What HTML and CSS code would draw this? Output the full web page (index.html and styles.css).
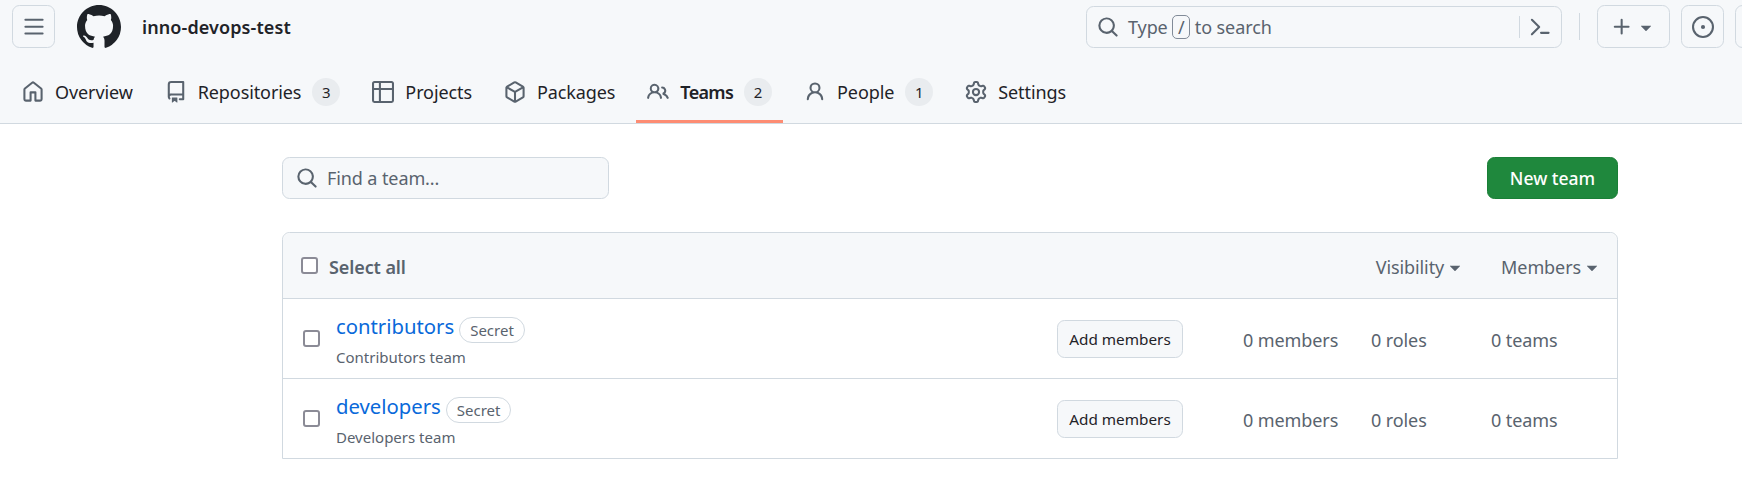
FILE: index.html
```html
<!DOCTYPE html>
<html lang="en">
    <head>
        <meta charset="UTF-8">
        <meta name="viewport" content="width=device-width, initial-scale=1.0">
        <title>Teams · inno-devops-test</title>
        <link rel="stylesheet" href="styles.css">
    </head>
    <body>
        <svg class="defs" width="0" height="0">
            <symbol id="i-bars" viewBox="0 0 16 16"><path d="M1 2.75A.75.75 0 0 1 1.75 2h12.5a.75.75 0 0 1 0 1.5H1.75A.75.75 0 0 1 1 2.75Zm0 5A.75.75 0 0 1 1.75 7h12.5a.75.75 0 0 1 0 1.5H1.75A.75.75 0 0 1 1 7.75ZM1.75 12h12.5a.75.75 0 0 1 0 1.5H1.75a.75.75 0 0 1 0-1.5Z"/></symbol>
            <symbol id="i-mark" viewBox="0 0 16 16"><path d="M8 0c4.42 0 8 3.58 8 8a8.013 8.013 0 0 1-5.45 7.59c-.4.08-.55-.17-.55-.38 0-.27.01-1.13.01-2.2 0-.75-.25-1.23-.54-1.48 1.78-.2 3.65-.88 3.65-3.95 0-.88-.31-1.59-.82-2.15.08-.2.36-1.02-.08-2.12 0 0-.67-.22-2.2.82-.64-.18-1.32-.27-2-.27-.68 0-1.36.09-2 .27-1.53-1.03-2.2-.82-2.2-.82-.44 1.1-.16 1.92-.08 2.12-.51.56-.82 1.28-.82 2.15 0 3.06 1.86 3.75 3.64 3.95-.23.2-.44.55-.51 1.07-.46.21-1.61.55-2.33-.66-.15-.24-.6-.83-1.23-.82-.67.01-.27.38.01.53.34.19.73.9.82 1.13.16.45.68 1.31 2.69.94 0 .67.01 1.3.01 1.49 0 .21-.15.45-.55.38A7.995 7.995 0 0 1 0 8c0-4.42 3.58-8 8-8Z"/></symbol>
            <symbol id="i-search" viewBox="0 0 16 16"><path d="M10.68 11.74a6 6 0 0 1-7.922-8.982 6 6 0 0 1 8.982 7.922l3.04 3.04a.749.749 0 0 1-.326 1.275.749.749 0 0 1-.734-.215ZM11.5 7a4.499 4.499 0 1 0-8.997 0A4.499 4.499 0 0 0 11.5 7Z"/></symbol>
            <symbol id="i-palette" viewBox="0 0 16 16"><path d="m6.354 8.04-4.773 4.773a.75.75 0 1 0 1.061 1.06L7.945 8.57a.75.75 0 0 0 0-1.06L2.642 2.206a.75.75 0 0 0-1.061 1.061L6.354 8.04ZM8.75 11.5a.75.75 0 0 0 0 1.5h5.5a.75.75 0 0 0 0-1.5h-5.5Z"/></symbol>
            <symbol id="i-plus" viewBox="0 0 16 16"><path d="M7.75 2a.75.75 0 0 1 .75.75V7h4.25a.75.75 0 0 1 0 1.5H8.5v4.25a.75.75 0 0 1-1.5 0V8.5H2.75a.75.75 0 0 1 0-1.5H7V2.75A.75.75 0 0 1 7.75 2Z"/></symbol>
            <symbol id="i-caret" viewBox="0 0 16 16"><path d="m4.427 7.427 3.396 3.396a.25.25 0 0 0 .354 0l3.396-3.396A.25.25 0 0 0 11.396 7H4.604a.25.25 0 0 0-.177.427Z"/></symbol>
            <symbol id="i-issue" viewBox="0 0 16 16"><path d="M8 9.5a1.5 1.5 0 1 0 0-3 1.5 1.5 0 0 0 0 3Z"/><path d="M8 0a8 8 0 1 1 0 16A8 8 0 0 1 8 0ZM1.5 8a6.5 6.5 0 1 0 13 0 6.5 6.5 0 0 0-13 0Z"/></symbol>
            <symbol id="i-home" viewBox="0 0 16 16"><path d="M6.906.664a1.749 1.749 0 0 1 2.187 0l5.25 4.2c.415.332.657.835.657 1.367v7.019A1.75 1.75 0 0 1 13.25 15h-3.5a.75.75 0 0 1-.75-.75V9H7v5.25a.75.75 0 0 1-.75.75h-3.5A1.75 1.75 0 0 1 1 13.25V6.23c0-.531.242-1.034.657-1.366l5.25-4.2Zm1.25 1.171a.25.25 0 0 0-.312 0l-5.25 4.2a.25.25 0 0 0-.094.196v7.019c0 .138.112.25.25.25H5.5V8.25a.75.75 0 0 1 .75-.75h3.5a.75.75 0 0 1 .75.75v5.25h2.75a.25.25 0 0 0 .25-.25V6.23a.25.25 0 0 0-.094-.195Z"/></symbol>
            <symbol id="i-repo" viewBox="0 0 16 16"><path d="M2 2.5A2.5 2.5 0 0 1 4.5 0h8.75a.75.75 0 0 1 .75.75v12.5a.75.75 0 0 1-.75.75h-2.5a.75.75 0 0 1 0-1.5h1.75v-2h-8a1 1 0 0 0-.714 1.7.75.75 0 1 1-1.072 1.05A2.495 2.495 0 0 1 2 11.5Zm10.5-1h-8a1 1 0 0 0-1 1v6.708A2.486 2.486 0 0 1 4.5 9h8ZM5 12.25a.25.25 0 0 1 .25-.25h3.5a.25.25 0 0 1 .25.25v3.25a.25.25 0 0 1-.4.2l-1.45-1.087a.249.249 0 0 0-.3 0L5.4 15.7a.25.25 0 0 1-.4-.2Z"/></symbol>
            <symbol id="i-table" viewBox="0 0 16 16"><path d="M0 1.75C0 .784.784 0 1.75 0h12.5C15.216 0 16 .784 16 1.75v12.5A1.75 1.75 0 0 1 14.25 16H1.75A1.75 1.75 0 0 1 0 14.25ZM6.5 6.5v8h7.75a.25.25 0 0 0 .25-.25V6.5Zm8-1.5V1.75a.25.25 0 0 0-.25-.25H6.5V5ZM5 5V1.5H1.75a.25.25 0 0 0-.25.25V5Zm-3.5 1.5v7.75c0 .138.112.25.25.25H5v-8Z"/></symbol>
            <symbol id="i-package" viewBox="0 0 16 16"><path d="m8.878.392 5.25 3.045c.54.314.872.89.872 1.514v6.098a1.75 1.75 0 0 1-.872 1.514l-5.25 3.045a1.75 1.75 0 0 1-1.756 0l-5.25-3.045A1.75 1.75 0 0 1 1 11.049V4.951c0-.624.332-1.201.872-1.514L7.122.392a1.75 1.75 0 0 1 1.756 0ZM7.875 1.69l-4.63 2.685L8 7.133l4.755-2.758-4.63-2.685a.248.248 0 0 0-.25 0ZM2.5 5.677v5.372c0 .09.047.171.125.216l4.625 2.683V8.432Zm6.25 8.271 4.625-2.683a.25.25 0 0 0 .125-.216V5.677L8.75 8.432Z"/></symbol>
            <symbol id="i-people" viewBox="0 0 16 16"><path d="M2 5.5a3.5 3.5 0 1 1 5.898 2.549 5.508 5.508 0 0 1 3.034 4.084.75.75 0 1 1-1.482.235 4 4 0 0 0-7.9 0 .75.75 0 0 1-1.482-.236A5.507 5.507 0 0 1 3.102 8.05 3.493 3.493 0 0 1 2 5.5ZM11 4a3.001 3.001 0 0 1 2.22 5.018 5.01 5.01 0 0 1 2.56 3.012.749.749 0 0 1-.885.954.752.752 0 0 1-.549-.514 3.507 3.507 0 0 0-2.522-2.372.75.75 0 0 1-.574-.73v-.352a.75.75 0 0 1 .416-.672A1.5 1.5 0 0 0 11 5.5.75.75 0 0 1 11 4Zm-5.5-.5a2 2 0 1 0-.001 3.999A2 2 0 0 0 5.5 3.5Z"/></symbol>
            <symbol id="i-person" viewBox="0 0 16 16"><path d="M10.561 8.073a6.005 6.005 0 0 1 3.432 5.142.75.75 0 1 1-1.498.07 4.5 4.5 0 0 0-8.99 0 .75.75 0 0 1-1.498-.07 6.004 6.004 0 0 1 3.431-5.142 3.999 3.999 0 1 1 5.123 0ZM10.5 5a2.5 2.5 0 1 0-5 0 2.5 2.5 0 0 0 5 0Z"/></symbol>
            <symbol id="i-gear" viewBox="0 0 16 16"><path d="M8 0a8.2 8.2 0 0 1 .701.031C9.444.095 9.99.645 10.16 1.29l.288 1.107c.018.066.079.158.212.224.231.114.454.243.668.386.123.082.233.09.299.071l1.103-.303c.644-.176 1.392.021 1.82.63.27.385.506.792.704 1.218.315.675.111 1.422-.364 1.891l-.814.806c-.049.048-.098.147-.088.294.016.257.016.515 0 .772-.01.147.038.246.088.294l.814.806c.475.469.679 1.216.364 1.891a7.977 7.977 0 0 1-.704 1.217c-.428.61-1.176.807-1.82.63l-1.102-.302c-.067-.019-.177-.011-.3.071a5.909 5.909 0 0 1-.668.386c-.133.066-.194.158-.211.224l-.29 1.106c-.168.646-.715 1.196-1.458 1.26a8.006 8.006 0 0 1-1.402 0c-.743-.064-1.289-.614-1.458-1.26l-.289-1.106c-.018-.066-.079-.158-.212-.224a5.738 5.738 0 0 1-.668-.386c-.123-.082-.233-.09-.299-.071l-1.103.303c-.644.176-1.392-.021-1.82-.63a8.12 8.12 0 0 1-.704-1.218c-.315-.675-.111-1.422.363-1.891l.815-.806c.05-.048.098-.147.088-.294a6.214 6.214 0 0 1 0-.772c.01-.147-.038-.246-.088-.294l-.815-.806C.635 6.045.431 5.298.746 4.623a7.92 7.92 0 0 1 .704-1.217c.428-.61 1.176-.807 1.82-.63l1.102.302c.067.019.177.011.3-.071.214-.143.437-.272.668-.386.133-.066.194-.158.211-.224l.29-1.106C6.009.645 6.556.095 7.299.03 7.53.01 7.764 0 8 0Zm-.571 1.525c-.036.003-.108.036-.137.146l-.289 1.105c-.147.561-.549.967-.998 1.189-.173.086-.34.183-.5.29-.417.278-.97.423-1.529.27l-1.103-.303c-.109-.03-.175.016-.195.045-.22.312-.412.644-.573.99-.014.031-.021.11.059.19l.815.806c.411.406.562.957.53 1.456a4.709 4.709 0 0 0 0 .582c.032.499-.119 1.05-.53 1.456l-.815.806c-.081.08-.073.159-.059.19.162.346.353.677.573.989.02.03.085.076.195.046l1.102-.303c.56-.153 1.113-.008 1.53.27.161.107.328.204.501.29.447.222.85.629.997 1.189l.289 1.105c.029.109.101.143.137.146a6.6 6.6 0 0 0 1.142 0c.036-.003.108-.036.137-.146l.289-1.105c.147-.561.549-.967.998-1.189.173-.086.34-.183.5-.29.417-.278.97-.423 1.529-.27l1.103.303c.109.029.175-.016.195-.045.22-.313.411-.644.573-.99.014-.031.021-.11-.059-.19l-.815-.806c-.411-.406-.562-.957-.53-1.456a4.709 4.709 0 0 0 0-.582c-.032-.499.119-1.05.53-1.456l.815-.806c.081-.08.073-.159.059-.19a6.464 6.464 0 0 0-.573-.989c-.02-.03-.085-.076-.195-.046l-1.102.303c-.56.153-1.113.008-1.53-.27a4.44 4.44 0 0 0-.501-.29c-.447-.222-.85-.629-.997-1.189l-.289-1.105c-.029-.11-.101-.143-.137-.146a6.6 6.6 0 0 0-1.142 0ZM11 8a3 3 0 1 1-6 0 3 3 0 0 1 6 0ZM9.5 8a1.5 1.5 0 1 0-3.001.001A1.5 1.5 0 0 0 9.5 8Z"/></symbol>
        </svg>

        <header class="site-head">
            <div class="top-bar">
                <button class="icon-btn menu-btn"><svg class="icon"><use href="#i-bars"/></svg></button>
                <svg class="logo"><use href="#i-mark"/></svg>
                <a class="org-name">inno-devops-test</a>
                <div class="top-search">
                    <svg class="icon"><use href="#i-search"/></svg>
                    <span class="top-search-text">Type <kbd class="slash">/</kbd> to search</span>
                    <span class="top-search-sep"></span>
                    <svg class="icon palette"><use href="#i-palette"/></svg>
                </div>
                <span class="top-sep"></span>
                <button class="icon-btn plus-btn">
                    <svg class="icon"><use href="#i-plus"/></svg>
                    <svg class="caret"><use href="#i-caret"/></svg>
                </button>
                <button class="icon-btn issue-btn"><svg class="icon"><use href="#i-issue"/></svg></button>
                <button class="icon-btn cut-btn"></button>
            </div>
            <nav class="tabs">
                <a class="tab"><svg class="icon"><use href="#i-home"/></svg>Overview</a>
                <a class="tab"><svg class="icon"><use href="#i-repo"/></svg>Repositories<span class="count">3</span></a>
                <a class="tab"><svg class="icon"><use href="#i-table"/></svg>Projects</a>
                <a class="tab"><svg class="icon"><use href="#i-package"/></svg>Packages</a>
                <a class="tab current"><svg class="icon"><use href="#i-people"/></svg><b>Teams</b><span class="count">2</span></a>
                <a class="tab"><svg class="icon"><use href="#i-person"/></svg>People<span class="count">1</span></a>
                <a class="tab"><svg class="icon"><use href="#i-gear"/></svg>Settings</a>
            </nav>
        </header>

        <main class="content">
            <div class="toolbar">
                <div class="find-box">
                    <svg class="icon"><use href="#i-search"/></svg>
                    <span>Find a team...</span>
                </div>
                <button class="new-team">New team</button>
            </div>

            <section class="team-table">
                <div class="table-head">
                    <span class="check head-check"></span>
                    <strong class="select-all">Select all</strong>
                    <span class="filter filter-vis">Visibility<svg class="caret"><use href="#i-caret"/></svg></span>
                    <span class="filter">Members<svg class="caret"><use href="#i-caret"/></svg></span>
                </div>
                <div class="team-row">
                    <span class="check"></span>
                    <div class="team-info">
                        <div class="team-title"><a class="team-name">contributors</a><span class="label">Secret</span></div>
                        <p class="team-desc">Contributors team</p>
                    </div>
                    <button class="add-members">Add members</button>
                    <span class="stat stat-members">0 members</span>
                    <span class="stat stat-roles">0 roles</span>
                    <span class="stat stat-teams">0 teams</span>
                </div>
                <div class="team-row">
                    <span class="check"></span>
                    <div class="team-info">
                        <div class="team-title"><a class="team-name">developers</a><span class="label">Secret</span></div>
                        <p class="team-desc">Developers team</p>
                    </div>
                    <button class="add-members">Add members</button>
                    <span class="stat stat-members">0 members</span>
                    <span class="stat stat-roles">0 roles</span>
                    <span class="stat stat-teams">0 teams</span>
                </div>
            </section>
        </main>
    </body>
</html>
```

FILE: styles.css
```css
html, body {
    margin: 0;
    height: 100%;
    overflow: hidden;
}
body {
    background: #fff;
    color: #1f2328;
    font-family: "Noto Sans", "Open Sans", sans-serif;
    font-size: 18px;
    letter-spacing: -0.1px;
}
button {
    font-family: inherit;
    letter-spacing: inherit;
}
.defs {
    display: block;
    height: 0;
}
.icon {
    width: 22px;
    height: 22px;
    fill: #59636e;
    flex: none;
}
.caret {
    width: 22px;
    height: 22px;
    fill: #59636e;
    flex: none;
}

/* header */
.site-head {
    background: #f6f8fa;
    border-bottom: 1px solid #d1d9e0;
    height: 123px;
}
.top-bar {
    display: flex;
    align-items: center;
    height: 43px;
    padding: 5px 0 0 12px;
    white-space: nowrap;
    overflow: hidden;
}
.icon-btn {
    display: flex;
    align-items: center;
    justify-content: center;
    height: 43px;
    padding: 0;
    background: #f6f8fa;
    border: 1px solid #d1d9e0;
    border-radius: 7.5px;
    flex: none;
}
.menu-btn {
    width: 43px;
}
.logo {
    width: 44px;
    height: 44px;
    fill: #1f2328;
    margin-left: 22px;
    flex: none;
}
.org-name {
    margin-left: 21px;
    font-weight: 600;
    font-size: 18px;
    letter-spacing: 0.1px;
    width: 944px;
    flex: none;
}
.top-search {
    display: flex;
    align-items: center;
    width: 476px;
    height: 42px;
    box-sizing: border-box;
    padding: 0 10px;
    border: 1px solid #d1d9e0;
    border-radius: 7.5px;
    color: #59636e;
    flex: none;
}
.top-search-text {
    margin-left: 9px;
    flex: 1;
}
.slash {
    display: inline-block;
    width: 16px;
    height: 22px;
    line-height: 22px;
    text-align: center;
    border: 1px solid #818b98;
    border-radius: 5px;
    font-family: inherit;
    font-size: 18px;
}
.top-search-sep {
    width: 1px;
    height: 22px;
    background: #d1d9e0;
    margin-right: 9px;
}
.top-sep {
    width: 1px;
    height: 27px;
    background: #d1d9e0;
    margin: 0 17px;
    flex: none;
}
.plus-btn {
    width: 73px;
    gap: 2px;
}
.issue-btn {
    width: 43px;
    margin-left: 11px;
}
.cut-btn {
    width: 43px;
    margin-left: 11px;
}

/* tabs */
.tabs {
    display: flex;
    height: 70px;
    margin-top: 5px;
    padding-left: 11px;
}
.tab {
    display: flex;
    align-items: center;
    gap: 11px;
    height: 70px;
    box-sizing: border-box;
    padding: 11px 11px 0;
    margin-right: 10px;
    white-space: nowrap;
    border-bottom: 3px solid transparent;
}
.tab.current {
    border-bottom-color: #fd8c73;
}
.tab b {
    font-weight: 600;
    letter-spacing: -0.7px;
}
.count {
    display: inline-block;
    min-width: 28px;
    height: 28px;
    line-height: 28px;
    text-align: center;
    font-size: 15px;
    background: #e9ecef;
    border-radius: 15px;
}

/* teams page */
.content {
    width: 1336px;
    margin: 33px 0 0 282px;
}
.toolbar {
    display: flex;
    justify-content: space-between;
    margin-bottom: 33px;
}
.find-box {
    display: flex;
    align-items: center;
    gap: 9px;
    width: 327px;
    height: 42px;
    box-sizing: border-box;
    padding: 0 13px;
    background: #f6f8fa;
    border: 1px solid #d1d9e0;
    border-radius: 7.5px;
    color: #59636e;
}
.new-team {
    width: 131px;
    height: 42px;
    padding: 0;
    background: #1f883d;
    color: #fff;
    border: 1px solid #1a7f37;
    border-radius: 7.5px;
    font-size: 17.5px;
    font-weight: 500;
    letter-spacing: 0;
}
.team-table {
    border: 1px solid #d1d9e0;
    border-radius: 7.5px 7.5px 0 0;
}
.table-head {
    display: flex;
    align-items: center;
    height: 65px;
    padding: 0 14px 0 20px;
    background: #f6f8fa;
    border-radius: 7.5px 7.5px 0 0;
    color: #59636e;
}
.check {
    width: 17px;
    height: 17px;
    box-sizing: border-box;
    background: #fff;
    border: 2px solid #8b8b96;
    border-radius: 3px;
    flex: none;
}
.head-check {
    margin-top: -1px;
    margin-left: -2px;
}
.select-all {
    font-weight: 600;
    margin: 3px 0 0 11px;
    flex: 1;
}
.filter {
    display: flex;
    align-items: center;
    margin-top: 3px;
}
.filter-vis {
    margin-right: 35px;
}
.team-row {
    display: flex;
    align-items: center;
    height: 79px;
    padding-left: 20px;
    border-top: 1px solid #d1d9e0;
}
.team-info {
    flex: 1;
    align-self: flex-start;
    margin-left: 16px;
    padding-top: 13px;
}
.team-title {
    display: flex;
    align-items: flex-start;
    gap: 5px;
}
.team-name {
    color: #0969da;
    font-size: 20.3px;
    letter-spacing: 0;
}
.label {
    height: 24px;
    line-height: 24px;
    margin-top: 5px;
    padding: 0 10px;
    color: #59636e;
    font-size: 15px;
    letter-spacing: 0;
    border: 1px solid #d1d9e0;
    border-radius: 15px;
}
.team-desc {
    margin: 4px 0 0;
    color: #59636e;
    font-size: 15px;
    letter-spacing: 0;
}
.add-members {
    width: 126px;
    height: 38px;
    padding: 0;
    background: #f6f8fa;
    color: #1f2328;
    border: 1px solid #d1d9e0;
    border-radius: 7.5px;
    font-size: 15.3px;
    font-weight: 400;
    letter-spacing: 0;
    margin: 0 60px 0 0;
}
.stat {
    color: #59636e;
    flex: none;
    margin-top: 2px;
}
.stat-members {
    width: 128px;
}
.stat-roles {
    width: 120px;
}
.stat-teams {
    width: 126px;
}
```
